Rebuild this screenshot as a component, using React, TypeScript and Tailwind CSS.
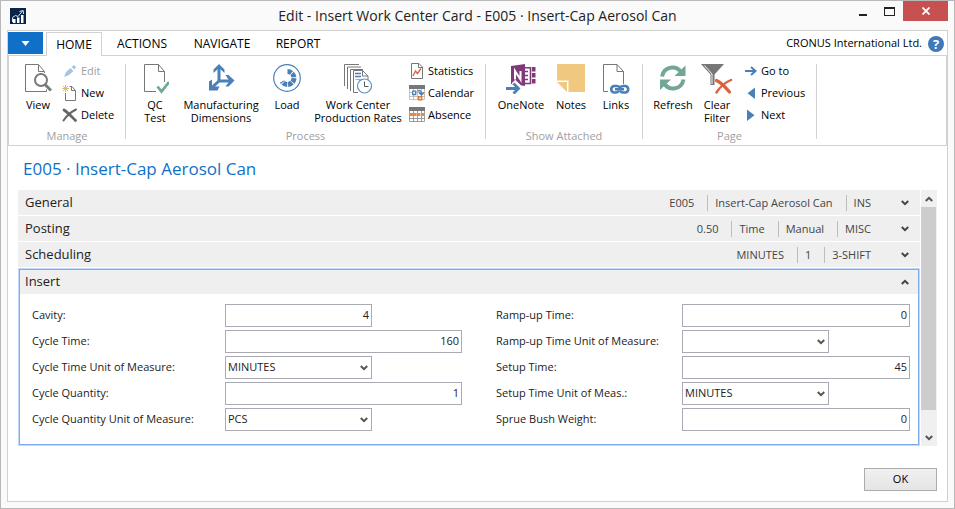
import React from "react";

type IconProps = { className?: string };

const AppLogo = () => (
  <svg width="16" height="16" viewBox="0 0 16 16" aria-hidden="true">
    <path fill="#0a2348" d="M0 0h16v16H0z" />
    <path fill="#fff" d="M3 11h2.500v4H3zM7 9.500h2.500V15H7zM11 7h2.500v8H11z" />
    <path d="M2.500 14V9.500L5.500 7.500 8 8.500 12.500 3M9.500 3.500 13.200 2.500 13.500 6" fill="none" stroke="#dbe4f0" strokeWidth="1" />
  </svg>
);

const ViewIcon = () => (
  <svg width="28" height="30" viewBox="0 0 28 30" aria-hidden="true">
    <path d="M22.500 25.500V27.500H1.500V.5H14.500L20.500 7.500V9" fill="none" stroke="#777" />
    <path d="M14.500 1V7.500H20" fill="none" stroke="#777" />
    <circle cx="17" cy="16" r="6" fill="#fff" stroke="#7a7a7a" strokeWidth="2" />
    <path d="M21 20.500 27 26.500" stroke="#7a7a7a" strokeWidth="3" />
  </svg>
);

const QcIcon = () => (
  <svg width="28" height="30" viewBox="0 0 28 30" aria-hidden="true">
    <path d="M15 27.500H3.500V.5H17.500L23.500 7.500V18" fill="none" stroke="#777" />
    <path d="M17.500 .5V7.500H23.500" fill="none" stroke="#777" />
    <path d="M16.500 22.500 20.500 27.500 28 18" fill="none" stroke="#73a794" strokeWidth="2.800" />
  </svg>
);

const DimensionsIcon = () => (
  <svg width="28" height="30" viewBox="0 0 28 30" aria-hidden="true">
    <path d="M12 3V17H24M12 17 5 23.500" fill="none" stroke="#4a80b8" strokeWidth="3" />
    <path
      fill="#4a80b8"
      d="M12 0 17.500 5.500V9L12 4 6.500 9V5.500ZM27.500 16.500 21.500 22.500H18.500L22.500 17 18.500 11H21.500ZM2 26.500V17.500L5 15.500V22.500H12.500L10.500 26.500Z"
    />
  </svg>
);

const LoadIcon = () => (
  <svg width="28" height="30" viewBox="0 0 28 30" aria-hidden="true">
    <circle cx="14" cy="14" r="13.300" fill="none" stroke="#4a80b8" strokeWidth="1.200" />
    <path d="M14.500 7.500A6.500 6.500 0 1 1 9 17.500" fill="none" stroke="#4a80b8" strokeWidth="5" strokeDasharray="4.300 .8" />
  </svg>
);

const RatesIcon = () => (
  <svg width="28" height="30" viewBox="0 0 28 30" aria-hidden="true">
    <g fill="none" stroke="#777">
      <path d="M.5 22V.5H15M3.500 25V3H17M6.500 27V5.500H19" />
      <path d="M14 28.500H9.500V6.500H18.500L24 12V16" fill="#fff" />
      <path d="M18.500 6.500V12H24" />
      <path d="M11.500 15.500H20M15.500 15.500V26" stroke="#aaa" />
    </g>
    <path d="M11 9.500h6M11 12.500h6" stroke="#4a80b8" strokeWidth="1.300" />
    <circle cx="20.500" cy="22" r="7" fill="#fff" stroke="#5f92c6" strokeWidth="1.200" />
    <path d="M20.500 17.500V22.500H24.500" fill="none" stroke="#555" />
  </svg>
);

const OneNoteIcon = () => (
  <svg width="30" height="30" viewBox="0 0 30 30" aria-hidden="true">
    <path fill="#80397b" d="M5 2 19 0V22L5 20Z" />
    <path d="M19 3.800H24.500V19.500H19M19 7.500h3M19 11.500h3M19 15.500h3" fill="none" stroke="#80397b" strokeWidth="1.600" />
    <path fill="#80397b" d="M26 3h3.500v4.500H26zM26 9h3.500v4.500H26zM26 15h3.500v4.500H26z" />
    <path d="M9 15.500V7L14.500 15.500V7" fill="none" stroke="#fff" strokeWidth="2" />
    <path d="M0 24.500H12M7.500 17.500 14.500 24.500 8.500 30" stroke="#fff" strokeWidth="5" fill="none" />
    <path d="M0 24.500H12M7.500 19.500 12.500 24.500 7.500 29.500" fill="none" stroke="#4a80b8" strokeWidth="2.800" />
  </svg>
);

const NotesIcon = () => (
  <svg width="28" height="30" viewBox="0 0 28 30" aria-hidden="true">
    <path fill="#f0c880" d="M0 0H28V28H11.500V16.500H0ZM0 18H10V28Z" />
  </svg>
);

const LinksIcon = () => (
  <svg width="28" height="30" viewBox="0 0 28 30" aria-hidden="true">
    <path d="M6 27.500H1.500V.5H15L21.500 7.500V20" fill="none" stroke="#777" />
    <path d="M15 .5V7.500H21.500" fill="none" stroke="#777" />
    <g fill="none" stroke="#4a80b8" strokeWidth="2.600">
      <path d="M17 26.500A3.500 3.500 0 0 1 14 28.500H12A3.300 3.300 0 0 1 12 22H15A3.500 3.500 0 0 1 18 24" />
      <path d="M18 24A3.500 3.500 0 0 1 21 22H23.500A3.300 3.300 0 0 1 23.500 28.500H21A3.500 3.500 0 0 1 18 27M13 25.300H22" />
    </g>
  </svg>
);

const RefreshIcon = () => (
  <svg width="28" height="30" viewBox="0 0 28 30" aria-hidden="true">
    <g fill="none" stroke="#73a794" strokeWidth="4">
      <path d="M3 12.500C5 2 17 1 22 8" />
      <path d="M24.500 15.500C22.500 26 10.500 27 5.500 20" />
    </g>
    <path fill="#73a794" d="M26.500 1.500V12H15.500ZM1 26V15.500H12Z" />
  </svg>
);

const ClearFilterIcon = () => (
  <svg width="32" height="30" viewBox="0 0 32 30" aria-hidden="true">
    <path fill="#777" d="M0 0H23L13.500 10.500V21H9.500V10.500Z" />
    <path d="M3.500 1.500 11 10V20" fill="none" stroke="#fff" strokeWidth=".9" />
    <g fill="none" stroke="#d9633f" strokeLinecap="round">
      <path d="M15.500 16.500C21 19 25 24 28.500 28" strokeWidth="3.200" />
      <path d="M30 16C25 18 19 23 15.500 28.500" strokeWidth="2.400" />
    </g>
  </svg>
);

const EditIcon = () => (
  <svg width="16" height="16" viewBox="0 0 16 16" aria-hidden="true">
    <path fill="#a9c4df" d="M2 14 4 9 8.500 5 11.500 8 7 12ZM9.500 4 12 2 14 4 12.500 6.500Z" />
  </svg>
);

const NewIcon = () => (
  <svg width="16" height="16" viewBox="0 0 16 16" aria-hidden="true">
    <path d="M3.500 8V15.500H13.500V5.500L10 1.500H7.500M9.500 2V5.500H13" fill="none" stroke="#777" />
    <path d="M3.500 0V7M0 3.500H7M1 1 6 6M6 1 1 6" stroke="#ecb765" strokeWidth="1" />
  </svg>
);

const DeleteIcon = () => (
  <svg width="16" height="16" viewBox="0 0 16 16" aria-hidden="true">
    <g fill="none" stroke="#666" strokeLinecap="round">
      <path d="M2 3C6 5.500 10 10 13.500 13.500" strokeWidth="2.800" />
      <path d="M14 2.500C9 5 4 9.500 1.500 13.500" strokeWidth="2" />
    </g>
  </svg>
);

const StatisticsIcon = () => (
  <svg width="16" height="16" viewBox="0 0 16 16" aria-hidden="true">
    <path d="M2.500 .5H10L13.500 4V15.500H2.500ZM9.500 .5V4.500H13.500" fill="none" stroke="#777" />
    <path d="M4 13 6.500 8 8.500 10.500 12 5.500" fill="none" stroke="#de6848" strokeWidth="1.400" />
  </svg>
);

const CalendarIcon = () => (
  <svg width="16" height="16" viewBox="0 0 16 16" aria-hidden="true">
    <path fill="#777" d="M0 0H16V4H0Z" />
    <path
      d="M.5 4V14.500H15.500V4M0 7.500H16M0 11.500H16M4.500 4V15M8.500 4V15M12.500 4V15"
      fill="none"
      stroke="#aaa"
      strokeWidth=".7"
    />
    <path d="M3.700 6.200h3v3.300h-3z" fill="#fff" stroke="#4a80b8" strokeWidth="1.300" />
    <path d="M8.500 6C11 5 12.500 6 12.500 9M10 7.500 12.500 10 15 7.500" fill="none" stroke="#4a80b8" strokeWidth="1.500" />
    <path d="M9.700 11.700h3v3h-3z" fill="#fff" stroke="#e07b35" strokeWidth="1.400" />
  </svg>
);

const AbsenceIcon = () => (
  <svg width="16" height="16" viewBox="0 0 16 16" aria-hidden="true">
    <path fill="#777" d="M0 0H16V4H0Z" />
    <path d="M.5 4V14.500H15.500V4M0 11.500H16M4.500 4V15M8.500 4V15M12.500 4V15" fill="none" stroke="#888" strokeWidth=".8" />
    <path d="M1 7.500H15" stroke="#e88a45" strokeWidth="3" strokeDasharray="3 .7" />
  </svg>
);

const GoToIcon = () => (
  <svg width="13" height="16" viewBox="0 0 13 16" aria-hidden="true">
    <path d="M0 8H10M6 4 10.500 8 6 12" fill="none" stroke="#4a80b8" strokeWidth="2" />
  </svg>
);
const PreviousIcon = () => (
  <svg width="13" height="16" viewBox="0 0 13 16" aria-hidden="true">
    <path d="M10 2.500V14L2.500 8.200Z" fill="#4a80b8" />
  </svg>
);
const NextIcon = () => (
  <svg width="13" height="16" viewBox="0 0 13 16" aria-hidden="true">
    <path d="M2 2.500V14L9.500 8.200Z" fill="#4a80b8" />
  </svg>
);

const Chevron = ({ className = "" }: IconProps) => (
  <svg width="8" height="6" viewBox="0 0 8 6" className={className} aria-hidden="true">
    <path d="M.8 1 4 4.200 7.200 1" fill="none" stroke="currentColor" strokeWidth="2" />
  </svg>
);

function BigButton({ icon, label, width }: { icon: React.ReactNode; label: string; width: string }) {
  return (
    <button type="button" className={`flex flex-col items-center ${width}`}>
      <span className="flex h-[34px] items-start justify-center">{icon}</span>
      <span className="text-center leading-[13px] whitespace-pre">{label}</span>
    </button>
  );
}

function SmallButton({ icon, label, disabled = false }: { icon: React.ReactNode; label: string; disabled?: boolean }) {
  return (
    <button
      type="button"
      disabled={disabled}
      className="flex h-[22px] items-center gap-[3px] whitespace-nowrap disabled:text-[#a0a0a0]"
    >
      {icon}
      {label}
    </button>
  );
}

function Group({ title, width, children }: { title: string; width: string; children: React.ReactNode }) {
  return (
    <section aria-label={title} className={`flex h-[75px] shrink-0 flex-col border-r border-[#d2d2d2] ${width}`}>
      <div className="flex h-16 shrink-0 items-start">{children}</div>
      <h2 className="text-center leading-4 text-[#a0a0a0]">{title}</h2>
    </section>
  );
}

function FastTab({ title, values }: { title: string; values: string[] }) {
  return (
    <button type="button" aria-expanded="false" className="flex h-[25px] w-full items-center bg-[#efefef] pr-[11px] pl-[7px]">
      <span className="flex-1 text-left text-[13px]">{title}</span>
      <span className="mr-[30px] flex items-center text-[#444]">
        {values.map((v) => (
          <span key={v} className="border-l border-[#bdbdbd] pr-[13px] pl-[7px] leading-4 first:border-0 last:pr-0">
            {v}
          </span>
        ))}
      </span>
      <Chevron className="text-[#444]" />
    </button>
  );
}

type FieldDef = { id: string; label: string; value: string; kind: "number" | "short" | "select" };

const leftFields: FieldDef[] = [
  { id: "cavity", label: "Cavity:", value: "4", kind: "short" },
  { id: "cycle-time", label: "Cycle Time:", value: "160", kind: "number" },
  { id: "cycle-time-unit", label: "Cycle Time Unit of Measure:", value: "MINUTES", kind: "select" },
  { id: "cycle-quantity", label: "Cycle Quantity:", value: "1", kind: "number" },
  { id: "cycle-quantity-unit", label: "Cycle Quantity Unit of Measure:", value: "PCS", kind: "select" },
];

const rightFields: FieldDef[] = [
  { id: "ramp-up", label: "Ramp-up Time:", value: "0", kind: "number" },
  { id: "ramp-up-unit", label: "Ramp-up Time Unit of Measure:", value: "", kind: "select" },
  { id: "setup", label: "Setup Time:", value: "45", kind: "number" },
  { id: "setup-unit", label: "Setup Time Unit of Meas.:", value: "MINUTES", kind: "select" },
  { id: "sprue", label: "Sprue Bush Weight:", value: "0", kind: "number" },
];

function Field({ field, labelWidth }: { field: FieldDef; labelWidth: string }) {
  return (
    <div className="flex h-[23px] items-center">
      <label htmlFor={field.id} className={`shrink-0 whitespace-nowrap ${labelWidth}`}>
        {field.label}
      </label>
      {field.kind === "select" ? (
        <div className="relative h-[23px] w-[147px]">
          <select
            id={field.id}
            defaultValue={field.value}
            className="h-full w-full appearance-none border border-[#aaaab2] bg-white pr-5 pb-px pl-[2px]"
          >
            <option value="">{""}</option>
            <option value="MINUTES">MINUTES</option>
            <option value="PCS">PCS</option>
          </select>
          <Chevron className="pointer-events-none absolute top-[9px] right-1 text-[#555]" />
        </div>
      ) : (
        <input
          id={field.id}
          defaultValue={field.value}
          className={`h-[23px] min-w-0 border border-[#aaaab2] bg-white pr-[2px] pb-[2px] text-right ${field.kind === "short" ? "w-[147px]" : "flex-1"}`}
        />
      )}
    </div>
  );
}

export default function App() {
  return (
    <div className="flex min-h-screen flex-col border border-[#b8b8b8] bg-[#fafafa] px-[6px] pb-[6px] font-['Open_Sans','Noto_Sans',sans-serif] text-[11px] text-[#222]">
      <header className="grid h-[29px] grid-cols-[1fr_auto_1fr] items-center">
        <div className="pl-[3px]">
          <AppLogo />
        </div>
        <h1 className="text-[14px]">Edit - Insert Work Center Card - E005 · Insert-Cap Aerosol Can</h1>
        <div className="flex h-full items-start justify-end">
          <button type="button" aria-label="Minimize" className="flex h-5 w-6 items-end justify-center pb-[5px]">
            <span className="h-[2px] w-2 bg-[#222]" />
          </button>
          <button type="button" aria-label="Maximize" className="flex h-5 w-7 items-center justify-center">
            <span className="h-[9px] w-[11px] border border-t-2 border-[#222]" />
          </button>
          <button type="button" aria-label="Close" className="flex h-5 w-[45px] items-center justify-center bg-[#c75050]">
            <svg width="8" height="8" viewBox="0 0 8 8" aria-hidden="true">
              <path d="M.5 .5 7.500 7.500M7.500 .5 .5 7.500" stroke="#fff" strokeWidth="1.800" />
            </svg>
          </button>
        </div>
      </header>

      <div className="flex flex-1 flex-col border border-[#d0d0d0] bg-white text-black">
        <nav className="flex h-[25px] items-stretch border-b border-[#d2d2d2] pt-px">
          <button type="button" aria-label="Application menu" className="mb-px flex w-[35px] items-center justify-center bg-[#1070c8]">
            <svg width="9" height="5" viewBox="0 0 9 5" aria-hidden="true">
              <path d="M.5 0H8.500L4.500 5Z" fill="#fff" />
            </svg>
          </button>
          <div role="tablist" className="-mb-px ml-[3px] flex text-[12px]">
            <button type="button" role="tab" aria-selected="true" className="w-14 border border-b-0 border-[#d2d2d2] bg-white">
              HOME
            </button>
            <button type="button" role="tab" className="w-20">
              ACTIONS
            </button>
            <button type="button" role="tab" className="w-20">
              NAVIGATE
            </button>
            <button type="button" role="tab" className="w-18">
              REPORT
            </button>
          </div>
          <div className="ml-auto flex items-center gap-[6px] pr-[3px]">
            <span>CRONUS International Ltd.</span>
            <button
              type="button"
              aria-label="Help"
              className="flex size-4 items-center justify-center rounded-full bg-[#3f79b8] text-[13px] leading-4 font-bold text-white"
            >
              ?
            </button>
          </div>
        </nav>

        <div className="flex h-[90px] border-x border-b border-[#d2d2d2] pt-[8px]">
          <Group title="Manage" width="w-[117px]">
            <div className="flex gap-[2px] pl-[7px]">
              <BigButton icon={<ViewIcon />} label="View" width="w-11" />
              <div className="-mt-1">
                <SmallButton icon={<EditIcon />} label="Edit" disabled />
                <SmallButton icon={<NewIcon />} label="New" />
                <SmallButton icon={<DeleteIcon />} label="Delete" />
              </div>
            </div>
          </Group>
          <Group title="Process" width="w-[360px]">
            <div className="flex gap-[3px] pl-[9px]">
              <BigButton icon={<QcIcon />} label={"QC\nTest"} width="w-10" />
              <BigButton icon={<DimensionsIcon />} label={"Manufacturing\nDimensions"} width="w-[86px]" />
              <BigButton icon={<LoadIcon />} label="Load" width="w-10" />
              <BigButton icon={<RatesIcon />} label={"Work Center\nProduction Rates"} width="w-24" />
              <div className="-mt-1">
                <SmallButton icon={<StatisticsIcon />} label="Statistics" />
                <SmallButton icon={<CalendarIcon />} label="Calendar" />
                <SmallButton icon={<AbsenceIcon />} label="Absence" />
              </div>
            </div>
          </Group>
          <Group title="Show Attached" width="w-[157px]">
            <div className="flex gap-2 pl-[11px]">
              <BigButton icon={<OneNoteIcon />} label="OneNote" width="w-12" />
              <BigButton icon={<NotesIcon />} label="Notes" width="w-9" />
              <BigButton icon={<LinksIcon />} label="Links" width="w-[38px]" />
            </div>
          </Group>
          <Group title="Page" width="w-[174px]">
            <div className="flex gap-1 pl-2">
              <BigButton icon={<RefreshIcon />} label="Refresh" width="w-11" />
              <BigButton icon={<ClearFilterIcon />} label={"Clear\nFilter"} width="w-9" />
              <div className="-mt-1 ml-[6px]">
                <SmallButton icon={<GoToIcon />} label="Go to" />
                <SmallButton icon={<PreviousIcon />} label="Previous" />
                <SmallButton icon={<NextIcon />} label="Next" />
              </div>
            </div>
          </Group>
        </div>

        <main className="flex flex-1 flex-col px-[10px]">
          <h2 className="pt-[11px] pb-[9px] pl-[5px] text-[17px] leading-6 text-[#1070c8]">E005 · Insert-Cap Aerosol Can</h2>
          <div className="flex gap-px text-[#222]">
            <div className="flex flex-1 flex-col gap-px">
              <FastTab title="General" values={["E005", "Insert-Cap Aerosol Can", "INS"]} />
              <FastTab title="Posting" values={["0.50", "Time", "Manual", "MISC"]} />
              <FastTab title="Scheduling" values={["MINUTES", "1", "3-SHIFT"]} />
              <section className="border border-[#c0d9fb]">
                <div className="border border-[#7eaaf2]">
                  <button type="button" aria-expanded="true" className="flex h-6 w-full items-center bg-[#efefef] pr-[9px] pl-[5px]">
                    <span className="flex-1 text-left text-[13px]">Insert</span>
                    <Chevron className="rotate-180 text-[#444]" />
                  </button>
                  <form className="grid grid-cols-[430fr_414fr] gap-[34px] pt-[10px] pr-2 pb-[13px] pl-3">
                    <div className="flex flex-col gap-[3px]">
                      {leftFields.map((f) => (
                        <Field key={f.id} field={f} labelWidth="w-[193px]" />
                      ))}
                    </div>
                    <div className="flex flex-col gap-[3px]">
                      {rightFields.map((f) => (
                        <Field key={f.id} field={f} labelWidth="w-[186px]" />
                      ))}
                    </div>
                  </form>
                </div>
              </section>
            </div>
            <div aria-hidden="true" className="flex w-4 flex-col bg-[#f0f0f0] text-[#555]">
              <div className="flex h-[17px] items-center justify-center">
                <Chevron className="rotate-180" />
              </div>
              <div className="w-[15px] flex-1 bg-[#cdcdcd]" />
              <div className="flex h-9 items-end justify-center pb-[5px]">
                <Chevron />
              </div>
            </div>
          </div>
          <div className="mt-[22px] flex justify-end">
            <button type="button" className="h-[23px] w-[73px] border border-[#acacac] bg-linear-to-b from-[#f0f0f0] to-[#e5e5e5]">
              OK
            </button>
          </div>
        </main>
      </div>
    </div>
  );
}
